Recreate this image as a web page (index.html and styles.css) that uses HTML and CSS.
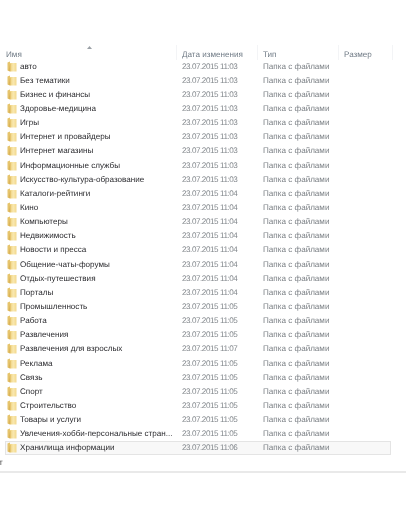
FILE: index.html
```html
<!DOCTYPE html>
<html lang="ru">
<head>
<meta charset="utf-8">
<title>Папки</title>
<link rel="stylesheet" href="styles.css">
</head>
<body>
<svg width="0" height="0" class="defs">
  <defs>
    <linearGradient id="fg" x1="0" y1="0" x2="1" y2="0">
      <stop offset="0" stop-color="#eed07a"/>
      <stop offset="0.5" stop-color="#f9e8b0"/>
      <stop offset="1" stop-color="#f2d88c"/>
    </linearGradient>
    <symbol id="folder" viewBox="0 0 10 11">
      <path d="M0.5 1.5 L3 0.5 V10.5 L0.5 9.6 Z" fill="#e6c46c"/>
      <path d="M3 2 H9.5 V10.5 H3 Z" fill="url(#fg)"/>
      <path d="M1.5 10 L3 3 H3.6 V10.5 Z" fill="#c99c3c" opacity=".4"/>
    </symbol>
  </defs>
</svg>
<main class="window">
  <header class="head">
    <div class="col name">Имя<svg class="sort" width="5" height="3" viewBox="0 0 5 3"><path d="M0 3 L2.5 0 L5 3 Z" fill="#9aa0a6"/></svg></div>
    <div class="col date">Дата изменения</div>
    <div class="col type">Тип</div>
    <div class="col size">Размер</div>
  </header>
  <ul class="list">
    <li class="row"><span class="name"><svg class="ico"><use href="#folder"/></svg>авто</span><span class="date">23.07.2015 11:03</span><span class="type">Папка с файлами</span></li>
    <li class="row"><span class="name"><svg class="ico"><use href="#folder"/></svg>Без тематики</span><span class="date">23.07.2015 11:03</span><span class="type">Папка с файлами</span></li>
    <li class="row"><span class="name"><svg class="ico"><use href="#folder"/></svg>Бизнес и финансы</span><span class="date">23.07.2015 11:03</span><span class="type">Папка с файлами</span></li>
    <li class="row"><span class="name"><svg class="ico"><use href="#folder"/></svg>Здоровье-медицина</span><span class="date">23.07.2015 11:03</span><span class="type">Папка с файлами</span></li>
    <li class="row"><span class="name"><svg class="ico"><use href="#folder"/></svg>Игры</span><span class="date">23.07.2015 11:03</span><span class="type">Папка с файлами</span></li>
    <li class="row"><span class="name"><svg class="ico"><use href="#folder"/></svg>Интернет и провайдеры</span><span class="date">23.07.2015 11:03</span><span class="type">Папка с файлами</span></li>
    <li class="row"><span class="name"><svg class="ico"><use href="#folder"/></svg>Интернет магазины</span><span class="date">23.07.2015 11:03</span><span class="type">Папка с файлами</span></li>
    <li class="row"><span class="name"><svg class="ico"><use href="#folder"/></svg>Информационные службы</span><span class="date">23.07.2015 11:03</span><span class="type">Папка с файлами</span></li>
    <li class="row"><span class="name"><svg class="ico"><use href="#folder"/></svg>Искусство-культура-образование</span><span class="date">23.07.2015 11:03</span><span class="type">Папка с файлами</span></li>
    <li class="row"><span class="name"><svg class="ico"><use href="#folder"/></svg>Каталоги-рейтинги</span><span class="date">23.07.2015 11:04</span><span class="type">Папка с файлами</span></li>
    <li class="row"><span class="name"><svg class="ico"><use href="#folder"/></svg>Кино</span><span class="date">23.07.2015 11:04</span><span class="type">Папка с файлами</span></li>
    <li class="row"><span class="name"><svg class="ico"><use href="#folder"/></svg>Компьютеры</span><span class="date">23.07.2015 11:04</span><span class="type">Папка с файлами</span></li>
    <li class="row"><span class="name"><svg class="ico"><use href="#folder"/></svg>Недвижимость</span><span class="date">23.07.2015 11:04</span><span class="type">Папка с файлами</span></li>
    <li class="row"><span class="name"><svg class="ico"><use href="#folder"/></svg>Новости и пресса</span><span class="date">23.07.2015 11:04</span><span class="type">Папка с файлами</span></li>
    <li class="row"><span class="name"><svg class="ico"><use href="#folder"/></svg>Общение-чаты-форумы</span><span class="date">23.07.2015 11:04</span><span class="type">Папка с файлами</span></li>
    <li class="row"><span class="name"><svg class="ico"><use href="#folder"/></svg>Отдых-путешествия</span><span class="date">23.07.2015 11:04</span><span class="type">Папка с файлами</span></li>
    <li class="row"><span class="name"><svg class="ico"><use href="#folder"/></svg>Порталы</span><span class="date">23.07.2015 11:04</span><span class="type">Папка с файлами</span></li>
    <li class="row"><span class="name"><svg class="ico"><use href="#folder"/></svg>Промышленность</span><span class="date">23.07.2015 11:05</span><span class="type">Папка с файлами</span></li>
    <li class="row"><span class="name"><svg class="ico"><use href="#folder"/></svg>Работа</span><span class="date">23.07.2015 11:05</span><span class="type">Папка с файлами</span></li>
    <li class="row"><span class="name"><svg class="ico"><use href="#folder"/></svg>Развлечения</span><span class="date">23.07.2015 11:05</span><span class="type">Папка с файлами</span></li>
    <li class="row"><span class="name"><svg class="ico"><use href="#folder"/></svg>Развлечения для взрослых</span><span class="date">23.07.2015 11:07</span><span class="type">Папка с файлами</span></li>
    <li class="row"><span class="name"><svg class="ico"><use href="#folder"/></svg>Реклама</span><span class="date">23.07.2015 11:05</span><span class="type">Папка с файлами</span></li>
    <li class="row"><span class="name"><svg class="ico"><use href="#folder"/></svg>Связь</span><span class="date">23.07.2015 11:05</span><span class="type">Папка с файлами</span></li>
    <li class="row"><span class="name"><svg class="ico"><use href="#folder"/></svg>Спорт</span><span class="date">23.07.2015 11:05</span><span class="type">Папка с файлами</span></li>
    <li class="row"><span class="name"><svg class="ico"><use href="#folder"/></svg>Строительство</span><span class="date">23.07.2015 11:05</span><span class="type">Папка с файлами</span></li>
    <li class="row"><span class="name"><svg class="ico"><use href="#folder"/></svg>Товары и услуги</span><span class="date">23.07.2015 11:05</span><span class="type">Папка с файлами</span></li>
    <li class="row"><span class="name"><svg class="ico"><use href="#folder"/></svg>Увлечения-хобби-персональные стран...</span><span class="date">23.07.2015 11:05</span><span class="type">Папка с файлами</span></li>
    <li class="row selected"><span class="name"><svg class="ico"><use href="#folder"/></svg>Хранилища информации</span><span class="date">23.07.2015 11:06</span><span class="type">Папка с файлами</span></li>
  </ul>
  <footer class="status">т</footer>
</main>
</body>
</html>
```
FILE: styles.css
```css
* { box-sizing: border-box; }
html, body { margin: 0; padding: 0; background: #fff; }
body {
  width: 406px;
  height: 516px;
  overflow: hidden;
  font-family: "Liberation Sans", Arial, sans-serif;
  font-size: 8.1px;
  color: #333;
  text-rendering: geometricPrecision;
}
.defs { display: block; width: 0; height: 0; }
.window {
  padding-top: 45px;
  filter: blur(0.3px);
}
.head {
  display: grid;
  grid-template-columns: 177px 81px 81px 54px;
  height: 14px;
}
.head .col {
  position: relative;
  border-right: 1px solid #f3f4f6;
  padding: 4px 0 0 5px;
  color: #6f7a85;
  line-height: 11px;
}
.head .name { padding-left: 6px; }
.sort { position: absolute; left: 87px; top: 1px; }
.list {
  list-style: none;
  margin: 0;
  padding: 0 0 0 5px;
  width: 391px;
}
.row {
  display: grid;
  grid-template-columns: 172px 81px 81px;
  height: 14.148px;
  line-height: 13px;
  align-items: center;
}
.row .name { display: flex; align-items: center; color: #2a2a2e; white-space: nowrap; padding-left: 2px; }
.row .date { color: #82878c; padding-left: 5px; letter-spacing: -0.44px; }
.row .type { color: #7a7f84; padding-left: 5px; }
.ico { width: 10px; height: 11px; margin-right: 3px; flex: none; }
.selected {
  background: #f8f8f8;
  box-shadow: inset 0 0 0 1px #e4e4e4;
}
.status {
  height: 16px;
  margin-top: 2px;
  border-bottom: 2px solid #e9e9e9;
  line-height: 12px;
  color: #444;
  overflow: hidden;
  text-indent: -1px;
}
```
